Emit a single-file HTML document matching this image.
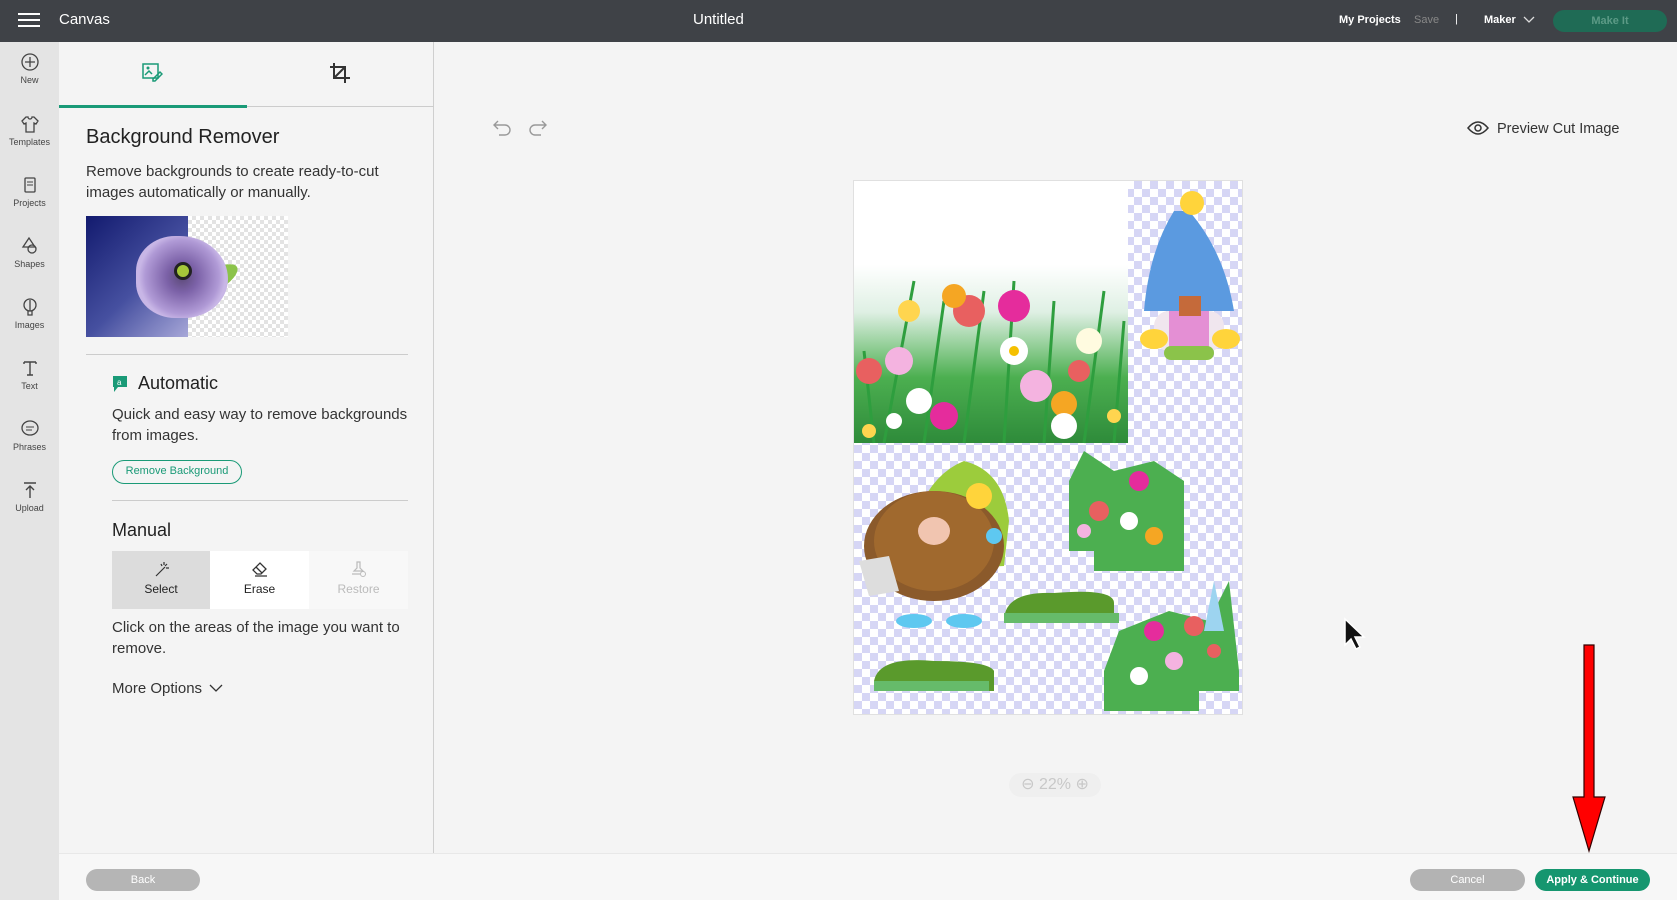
<!DOCTYPE html>
<html><head><meta charset="utf-8"><style>
*{box-sizing:border-box;margin:0;padding:0}
body{width:1677px;height:900px;overflow:hidden;background:#f4f4f4;font-family:"Liberation Sans",sans-serif;color:#222;position:relative}
.a{position:absolute}
.top{left:0;top:0;width:1677px;height:42px;background:#3f4247;color:#fff}
.rail{left:0;top:42px;width:59px;height:858px;background:#e4e4e4}
.ri{position:absolute;left:0;width:59px;text-align:center;font-size:9px;color:#444}
.ri svg{display:block;margin:0 auto 3px}
.panel{left:59px;top:42px;width:375px;height:811px;background:#f4f4f4;border-right:1px solid #cfcfcf}
.chk{background-color:#fff;background-image:linear-gradient(45deg,#d6d6f5 25%,transparent 25%,transparent 75%,#d6d6f5 75%),linear-gradient(45deg,#d6d6f5 25%,transparent 25%,transparent 75%,#d6d6f5 75%);background-size:16px 16px;background-position:0 0,8px 8px}
.chk2{background-color:#fff;background-image:linear-gradient(45deg,#e3e3e3 25%,transparent 25%,transparent 75%,#e3e3e3 75%),linear-gradient(45deg,#e3e3e3 25%,transparent 25%,transparent 75%,#e3e3e3 75%);background-size:8px 8px;background-position:0 0,4px 4px}
.btn{border-radius:12px;font-size:11px;text-align:center;line-height:22px;color:#fff}
.t{font-size:15px;line-height:21px;color:#333}
</style></head><body>
<div class="a top">
 <div class="a" style="left:18px;top:13px;width:22px;height:2px;background:#fff;box-shadow:0 6px 0 #fff,0 12px 0 #fff"></div>
 <div class="a" style="left:59px;top:11px;font-size:15px">Canvas</div>
 <div class="a" style="left:693px;top:11px;font-size:15px">Untitled</div>
 <div class="a" style="left:1339px;top:14px;font-size:11px;font-weight:bold">My Projects</div>
 <div class="a" style="left:1414px;top:14px;font-size:11px;color:#888">Save</div>
 <div class="a" style="left:1455px;top:13px;font-size:11px">|</div>
 <div class="a" style="left:1484px;top:14px;font-size:11px;font-weight:bold">Maker</div>
 <svg class="a" style="left:1523px;top:16px" width="12" height="8"><path d="M1 1l5 5 5-5" stroke="#ddd" fill="none" stroke-width="1.3"/></svg>
 <div class="a btn" style="left:1553px;top:10px;width:114px;height:22px;background:#1f6b55;color:#5c9a86;font-weight:bold">Make It</div>
</div>
<div class="a rail">
 <div class="ri" style="top:10px"><svg width="20" height="20"><circle cx="10" cy="10" r="8" fill="none" stroke="#444" stroke-width="1.3"/><path d="M10 5v10M5 10h10" stroke="#444" stroke-width="1.3"/></svg>New</div>
 <div class="ri" style="top:72px"><svg width="20" height="20"><path d="M6 3l-4 4 2 3 2-1v9h8V9l2 1 2-3-4-4h-2a2 2 0 01-4 0z" fill="none" stroke="#444" stroke-width="1.3"/></svg>Templates</div>
 <div class="ri" style="top:133px"><svg width="20" height="20"><rect x="5" y="3" width="10" height="14" rx="1" fill="none" stroke="#444" stroke-width="1.3"/><path d="M7 7h6M7 10h6" stroke="#444"/></svg>Projects</div>
 <div class="ri" style="top:194px"><svg width="20" height="20"><path d="M9 2l-6 9h12z" fill="none" stroke="#444" stroke-width="1.3"/><circle cx="12" cy="13" r="4" fill="none" stroke="#444" stroke-width="1.3"/></svg>Shapes</div>
 <div class="ri" style="top:255px"><svg width="20" height="20"><circle cx="10" cy="8" r="6" fill="none" stroke="#444" stroke-width="1.3"/><path d="M8 14v4h4v-4M10 3v11" stroke="#444" stroke-width="1.3" fill="none"/></svg>Images</div>
 <div class="ri" style="top:316px"><svg width="20" height="20"><path d="M4 4h12M10 4v13M7 17h6M4 4v2M16 4v2" stroke="#444" stroke-width="1.4" fill="none"/></svg>Text</div>
 <div class="ri" style="top:377px"><svg width="20" height="20"><ellipse cx="10" cy="9" rx="8" ry="7" fill="none" stroke="#444" stroke-width="1.3"/><path d="M6 8h8M6 11h6" stroke="#444"/></svg>Phrases</div>
 <div class="ri" style="top:438px"><svg width="20" height="20"><path d="M4 3h12M10 18V6M6 10l4-4 4 4" stroke="#444" stroke-width="1.4" fill="none"/></svg>Upload</div>
</div>
<div class="a panel">
 <svg class="a" style="left:82px;top:19px" width="22" height="22"><rect x="2" y="3" width="15" height="14" fill="none" stroke="#1a9a77" stroke-width="1.5"/><path d="M4 14l4-4 3 3M12 18l7-7 2 2-7 7h-2z" stroke="#1a9a77" stroke-width="1.5" fill="none"/><circle cx="7" cy="7" r="1.5" fill="#1a9a77"/></svg>
 <svg class="a" style="left:270px;top:20px" width="22" height="22"><path d="M5 1v15h16M1 5h15v16M5 16L16 5" stroke="#333" stroke-width="2" fill="none"/></svg>
 <div class="a" style="left:0;top:64px;width:375px;height:1px;background:#ccc"></div>
 <div class="a" style="left:0;top:63px;width:188px;height:3px;background:#1a9a77"></div>
 <div class="a" style="left:27px;top:84px;font-size:20px;color:#222">Background Remover</div>
 <div class="a t" style="left:27px;top:119px;width:320px">Remove backgrounds to create ready-to-cut images automatically or manually.</div>
 <div class="a" style="left:27px;top:174px;width:202px;height:121px;overflow:hidden">
  <div class="a" style="left:0;top:0;width:102px;height:121px;background:linear-gradient(135deg,#121a6e,#4650a0 55%,#a7a7d8)"></div>
  <div class="a chk2" style="left:102px;top:0;width:100px;height:121px"></div>
  <div class="a" style="left:95px;top:55px;width:60px;height:22px;background:#8bc34a;border-radius:50%;transform:rotate(-30deg)"></div>
  <div class="a" style="left:50px;top:20px;width:92px;height:82px;background:radial-gradient(circle at 50% 50%,#5c4a78 0,#7c62a8 25%,#b09ad6 60%,#c8b6e6 70%);border-radius:45% 55% 50% 45%"></div>
  <div class="a" style="left:88px;top:46px;width:18px;height:18px;background:#a6c83a;border-radius:50%;border:3px solid #222"></div>
 </div>
 <div class="a" style="left:27px;top:312px;width:322px;height:1px;background:#ccc"></div>
 <svg class="a" style="left:53px;top:333px" width="16" height="18"><path d="M1 1h14v11H6l-4 5V12H1z" fill="#1a9a77"/><text x="5" y="10" font-size="8" fill="#fff" font-family="Liberation Sans">a</text></svg>
 <div class="a" style="left:79px;top:331px;font-size:18px">Automatic</div>
 <div class="a t" style="left:53px;top:362px;width:300px">Quick and easy way to remove backgrounds from images.</div>
 <div class="a" style="left:53px;top:418px;width:130px;height:24px;border:1.5px solid #1a9a77;border-radius:12px;color:#1a9a77;font-size:11px;text-align:center;line-height:21px">Remove Background</div>
 <div class="a" style="left:53px;top:458px;width:296px;height:1px;background:#ccc"></div>
 <div class="a" style="left:53px;top:478px;font-size:18px">Manual</div>
 <div class="a" style="left:53px;top:509px;width:98px;height:58px;background:#dcdcdc;text-align:center;font-size:12px;padding-top:8px"><svg width="20" height="20"><path d="M5 17l9-9M13 3v3M16 5l-2 2M18 9h-3M10 5l1 2" stroke="#333" stroke-width="1.2" fill="none"/></svg><br>Select</div>
 <div class="a" style="left:151px;top:509px;width:99px;height:58px;background:#fff;text-align:center;font-size:12px;padding-top:8px"><svg width="20" height="20"><path d="M3 11l7-7 6 6-5 5H7zM6 8l6 6M5 17h12" stroke="#333" stroke-width="1.3" fill="none"/></svg><br>Erase</div>
 <div class="a" style="left:250px;top:509px;width:99px;height:58px;background:#f8f8f8;text-align:center;font-size:12px;padding-top:8px;color:#bbb"><svg width="20" height="20"><path d="M8 3h3v6l3 3H5l3-3zM3 15h8" stroke="#bbb" stroke-width="1.2" fill="none"/><circle cx="14" cy="15" r="2.5" fill="none" stroke="#bbb"/></svg><br>Restore</div>
 <div class="a t" style="left:53px;top:575px;width:300px">Click on the areas of the image you want to remove.</div>
 <div class="a t" style="left:53px;top:636px">More Options</div>
 <svg class="a" style="left:150px;top:642px" width="14" height="9"><path d="M1 1l6 6 6-6" stroke="#333" fill="none" stroke-width="1.3"/></svg>
</div>
<div class="a" style="left:59px;top:853px;width:1618px;height:47px;background:#f7f7f7;border-top:1px solid #e8e8e8"></div>
<div class="a btn" style="left:86px;top:869px;width:114px;height:22px;background:#b5b5b5">Back</div>
<div class="a btn" style="left:1410px;top:869px;width:115px;height:22px;background:#b3b3b3">Cancel</div>
<div class="a btn" style="left:1535px;top:869px;width:115px;height:22px;background:#15966f;font-weight:bold">Apply &amp; Continue</div>
<svg class="a" style="left:490px;top:118px" width="60" height="22"><path d="M4 7h11a5 5 0 010 10H9M8 3L4 7l4 4" stroke="#999" fill="none" stroke-width="1.4"/><path d="M56 7H45a5 5 0 000 10h6M52 3l4 4-4 4" stroke="#999" fill="none" stroke-width="1.4"/></svg>
<svg class="a" style="left:1467px;top:120px" width="22" height="16"><path d="M1 8q10-12 20 0q-10 12-20 0z" stroke="#333" fill="none" stroke-width="1.5"/><circle cx="11" cy="8" r="3" stroke="#333" fill="none" stroke-width="1.5"/></svg>
<div class="a" style="left:1497px;top:121px;font-size:14.5px;color:#333">Preview Cut Image</div>
<div class="a chk" style="left:853px;top:180px;width:390px;height:535px;border:1px solid #e0e0e0">
 <div class="a" style="left:0;top:0;width:274px;height:262px;background:linear-gradient(#fff 0,#fff 32%,#dff0e4 50%,#4caf50 75%,#2e8b3a)"></div>
 <svg class="a" style="left:0;top:0" width="390" height="535">
  <g stroke="#2e9e3e" stroke-width="3"><path d="M30 262L60 100M70 262L90 120M110 262L130 110M150 262L160 100M190 262L200 120M230 262L250 110M260 262L270 140M20 262L10 170"/></g>
  <circle cx="15" cy="190" r="13" fill="#e86060"/><circle cx="45" cy="180" r="14" fill="#f4b3e0"/><circle cx="115" cy="130" r="16" fill="#e86060"/>
  <circle cx="160" cy="125" r="16" fill="#e52c9c"/><circle cx="100" cy="115" r="12" fill="#f5a623"/><circle cx="55" cy="130" r="11" fill="#ffd54f"/>
  <circle cx="160" cy="170" r="14" fill="#fff"/><circle cx="160" cy="170" r="5" fill="#f5c000"/><circle cx="65" cy="220" r="13" fill="#fff"/><circle cx="90" cy="235" r="14" fill="#e52c9c"/>
  <circle cx="182" cy="205" r="16" fill="#f4b3e0"/><circle cx="210" cy="223" r="13" fill="#f5a623"/><circle cx="210" cy="245" r="13" fill="#fff"/><circle cx="225" cy="190" r="11" fill="#e86060"/><circle cx="235" cy="160" r="13" fill="#fffbe0"/>
  <circle cx="15" cy="250" r="7" fill="#ffd54f"/><circle cx="40" cy="240" r="8" fill="#fff"/><circle cx="260" cy="235" r="7" fill="#ffd54f"/>
  <path d="M320 30q-25 40-30 100h90q-10-60-45-100z" fill="#5b9ae0"/><circle cx="338" cy="22" r="12" fill="#ffd43b"/>
  <rect x="300" y="130" width="70" height="40" rx="15" fill="#f0e6ee"/><rect x="315" y="130" width="40" height="38" fill="#e48fd4"/><rect x="325" y="115" width="22" height="20" fill="#c56a3a"/>
  <ellipse cx="300" cy="158" rx="14" ry="10" fill="#ffd43b"/><ellipse cx="372" cy="158" rx="14" ry="10" fill="#ffd43b"/><rect x="310" y="165" width="50" height="14" rx="7" fill="#8bc34a"/>
  <path d="M50 390q10-90 60-110q40 10 45 60l-5 45z" fill="#9ccc3c"/><ellipse cx="80" cy="365" rx="70" ry="55" fill="#8b5a2b"/><ellipse cx="80" cy="360" rx="60" ry="50" fill="#a0692e"/>
  <ellipse cx="80" cy="350" rx="16" ry="14" fill="#f1c5b0"/><circle cx="125" cy="315" r="13" fill="#ffd43b"/><circle cx="140" cy="355" r="8" fill="#5ec8f0"/>
  <path d="M5 380l30-5 10 35-30 5z" fill="#ddd"/><ellipse cx="60" cy="440" rx="18" ry="7" fill="#5ec8f0"/><ellipse cx="110" cy="440" rx="18" ry="7" fill="#5ec8f0"/>
  <path d="M150 440q0-30 50-28q60-5 60 10v18z" fill="#5a9a2c"/><rect x="150" y="432" width="115" height="10" fill="#66bb6a"/>
  <path d="M20 500q5-25 60-20q55 0 60 10v20H20z" fill="#5a9a2c"/><rect x="20" y="500" width="115" height="10" fill="#66bb6a"/>
  <path d="M215 370v-70l15-30 30 20 40-10 30 20v90h-90v-20z" fill="#4caf50"/>
  <circle cx="245" cy="330" r="10" fill="#e86060"/><circle cx="285" cy="300" r="10" fill="#e52c9c"/><circle cx="275" cy="340" r="9" fill="#fff"/><circle cx="300" cy="355" r="9" fill="#f5a623"/><circle cx="230" cy="350" r="7" fill="#f4b3e0"/>
  <path d="M250 490l15-40 50-20 40 10 20-40 10 90v20h-40v20h-95z" fill="#4caf50"/>
  <circle cx="300" cy="450" r="10" fill="#e52c9c"/><circle cx="340" cy="445" r="10" fill="#e86060"/><circle cx="285" cy="495" r="9" fill="#fff"/><circle cx="320" cy="480" r="9" fill="#f4b3e0"/><circle cx="360" cy="470" r="7" fill="#e86060"/><path d="M360 400l10 50h-20z" fill="#9dd4f0"/>
 </svg>
</div>
<div class="a" style="left:1009px;top:773px;width:92px;height:24px;border-radius:12px;background:#efefef;color:#c8c8c8;font-size:16px;line-height:24px;text-align:center">⊖ 22% ⊕</div>
<svg class="a" style="left:1343px;top:617px" width="24" height="34"><path d="M2 2v26l6-6 5 10 4-2-5-10h9z" fill="#111" stroke="#fff" stroke-width="1.5"/></svg>
<svg class="a" style="left:1570px;top:644px" width="36" height="210"><path d="M14 1h10v152h11L19 207 3 153h11z" fill="#f00" stroke="#300" stroke-width="1.2"/></svg>
</body></html>
